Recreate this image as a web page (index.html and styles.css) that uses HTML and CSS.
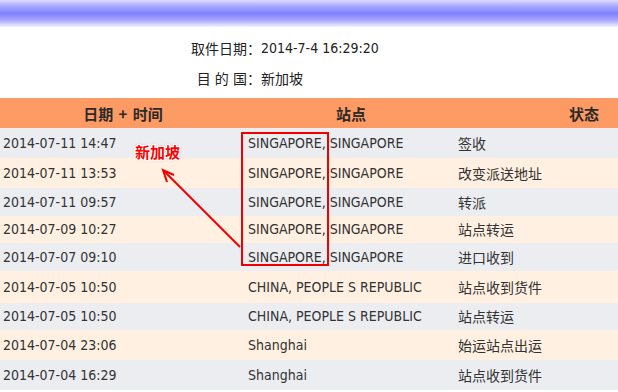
FILE: index.html
```html
<!DOCTYPE html>
<html lang="zh">
<head>
<meta charset="utf-8">
<link rel="stylesheet" href="styles.css">
</head>
<body>
<div class="page">
  <div class="topbar"></div>
  <div class="info">
    <div class="lbl">取件日期：</div><div class="val">2014-7-4 16:29:20</div>
    <div class="lbl">目 的 国：</div><div class="val">新加坡</div>
  </div>
  <div class="wrap">
    <div class="table">
      <div class="row head">
        <div class="c1">日期 + 时间</div><div class="c2">站点</div><div class="c3">状态</div>
      </div>
      <div class="row grey"><div class="c1">2014-07-11 14:47</div><div class="c2">SINGAPORE, SINGAPORE</div><div class="c3">签收</div></div>
      <div class="row peach"><div class="c1">2014-07-11 13:53</div><div class="c2">SINGAPORE, SINGAPORE</div><div class="c3">改变派送地址</div></div>
      <div class="row grey short"><div class="c1">2014-07-11 09:57</div><div class="c2">SINGAPORE, SINGAPORE</div><div class="c3">转派</div></div>
      <div class="row peach short"><div class="c1">2014-07-09 10:27</div><div class="c2">SINGAPORE, SINGAPORE</div><div class="c3">站点转运</div></div>
      <div class="row grey short"><div class="c1">2014-07-07 09:10</div><div class="c2">SINGAPORE, SINGAPORE</div><div class="c3">进口收到</div></div>
      <div class="row peach tall"><div class="c1">2014-07-05 10:50</div><div class="c2">CHINA, PEOPLE S REPUBLIC</div><div class="c3">站点收到货件</div></div>
      <div class="row grey short"><div class="c1">2014-07-05 10:50</div><div class="c2">CHINA, PEOPLE S REPUBLIC</div><div class="c3">站点转运</div></div>
      <div class="row peach"><div class="c1">2014-07-04 23:06</div><div class="c2">Shanghai</div><div class="c3">始运站点出运</div></div>
      <div class="row grey"><div class="c1">2014-07-04 16:29</div><div class="c2">Shanghai</div><div class="c3">站点收到货件</div></div>
    </div>
  </div>
  <div class="mark-box"></div>
  <div class="mark-label">新加坡</div>
  <svg class="mark-arrow" width="618" height="392" viewBox="0 0 618 392">
    <path d="M240 247 L164 171" stroke="#f20000" stroke-width="2" fill="none"/>
    <path d="M174 175 L163 170 L167 182" stroke="#f20000" stroke-width="2" fill="none" stroke-linejoin="miter"/>
  </svg>
</div>
</body>
</html>
```
FILE: styles.css
```css
html, body {
  margin: 0;
  padding: 0;
  overflow: hidden;
  background: #fff;
}
.page {
  position: relative;
  width: 618px;
  height: 392px;
  overflow: hidden;
  font-family: "DejaVu Sans Condensed", "DejaVu Sans", "Noto Sans CJK SC", sans-serif;
  font-stretch: condensed;
  color: #333;
}
.topbar {
  height: 27px;
  background: linear-gradient(#dcdcff 0%, #a4a4ff 25%, #8080ff 50%, #a8a8ff 75%, #f2f2ff 100%);
}
.info {
  display: grid;
  grid-template-columns: 261px auto;
  grid-auto-rows: 30px;
  align-items: center;
  padding-top: 6px;
  height: 65px;
  font-size: 14px;
  color: #222;
}
.lbl {
  justify-self: end;
  font-family: "Noto Sans CJK SC", sans-serif;
  word-spacing: 1px;
}
.val {
  font-family: "DejaVu Sans Condensed", "DejaVu Sans", "Noto Sans CJK SC", sans-serif;
}
.wrap {
  width: 618px;
  overflow: hidden;
}
.table {
  width: 712px;
  font-size: 14px;
}
.row {
  display: grid;
  grid-template-columns: 246px 210px 256px;
  height: 30px;
  align-items: center;
}
.row.short { height: 27.5px; }
.row.tall { height: 32px; }
.row.head {
  height: 30px;
  background: #fe9a64;
  font-weight: bold;
  font-family: "Noto Sans CJK SC", sans-serif;
  font-size: 15px;
  color: #2a2a2a;
  word-spacing: 2px;
}
.row.head > div {
  text-align: center;
}
.row.grey { background: #ecedf1; }
.row.peach { background: #fff0e1; }
.c1 { padding-left: 3px; }
.c2 { padding-left: 2px; }
.c3 { padding-left: 2px; font-family: "Noto Sans CJK SC", sans-serif; }
.row.head .c1, .row.head .c2, .row.head .c3 { padding-left: 0; }
.mark-box {
  position: absolute;
  left: 241px;
  top: 132px;
  width: 88px;
  height: 134px;
  box-sizing: border-box;
  border: 2px solid #f20000;
}
.mark-label {
  position: absolute;
  left: 135px;
  top: 142px;
  font-family: "Noto Sans CJK SC", sans-serif;
  font-weight: bold;
  font-size: 15px;
  line-height: 20px;
  color: #f00;
  text-shadow: 1px 0 0 #fff, -1px 0 0 #fff, 0 1px 0 #fff, 0 -1px 0 #fff,
    1px 1px 0 #fff, -1px -1px 0 #fff, 1px -1px 0 #fff, -1px 1px 0 #fff,
    0 0 3px #ff6060;
}
.mark-arrow {
  position: absolute;
  left: 0;
  top: 0;
  pointer-events: none;
}
```
